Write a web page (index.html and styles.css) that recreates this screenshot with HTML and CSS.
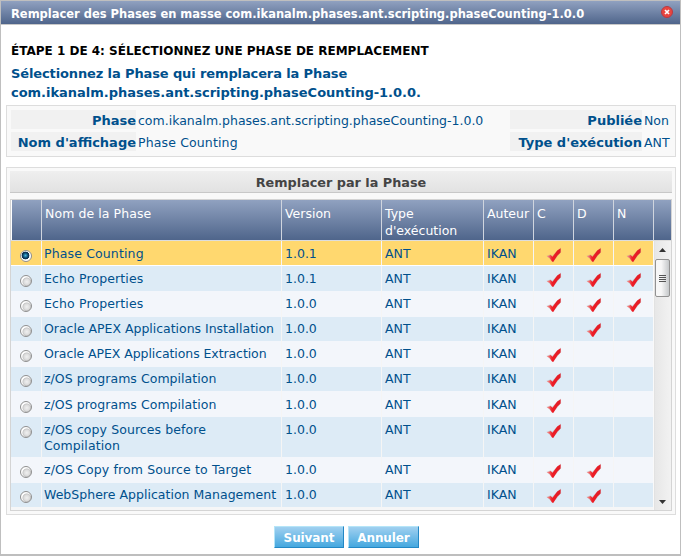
FILE: index.html
```html
<!DOCTYPE html>
<html lang="fr">
<head>
<meta charset="utf-8">
<title>Remplacer des Phases en masse</title>
<link rel="stylesheet" href="styles.css">
</head>
<body>
<svg class="defs" width="0" height="0">
  <defs>
    <linearGradient id="red" x1="0" x2="1"><stop offset="0" stop-color="#f5a9a4"/><stop offset=".4" stop-color="#ee1c25"/><stop offset="1" stop-color="#e21d27"/></linearGradient>
    <symbol id="tick" viewBox="0 0 16 16"><path d="M0.5 8.8 L4.6 7.2 L6.2 8.6 L14.6 .4 L15.2 5 L7 15 Z" fill="#999" opacity=".3"/><path d="M0.5 9.4 L4.6 8 L6.5 9.8 L11.2 3.4 L14.7 1.2 L14.6 5.4 L11.5 8.6 L7.2 15 L6 14.4 L3.4 10.8 Z" fill="url(#red)"/></symbol>
  </defs>
</svg>
<div class="dialog">
  <header class="titlebar">
    <span class="title">Remplacer des Phases en masse com.ikanalm.phases.ant.scripting.phaseCounting-1.0.0</span>
    <svg class="close" viewBox="0 0 12 12"><circle cx="6" cy="6" r="5.5" fill="#e8453f" stroke="#b63a45"/><path d="M4 4l4 4M8 4l-4 4" stroke="#fff" stroke-width="1.7"/></svg>
  </header>
  <h1 class="step">ÉTAPE 1 DE 4: SÉLECTIONNEZ UNE PHASE DE REMPLACEMENT</h1>
  <h2 class="lead"><span class="lead-a">Sélectionnez la Phase qui remplacera la Phase</span><br><span class="lead-b">com.ikanalm.phases.ant.scripting.phaseCounting-1.0.0.</span></h2>
  <section class="info">
    <b>Phase</b><span class="fqn">com.ikanalm.phases.ant.scripting.phaseCounting-1.0.0</span><b>Publiée</b><span>Non</span>
    <b>Nom d'affichage</b><span class="display-name">Phase Counting</span><b>Type d'exécution</b><span>ANT</span>
  </section>
  <section class="panel">
    <h3 class="caption">Remplacer par la Phase</h3>
    <div class="table">
      <div class="cols head"><div></div><div>Nom de la Phase</div><div>Version</div><div>Type<br>d'exécution</div><div>Auteur</div><div>C</div><div>D</div><div>N</div><div></div></div>
      <div class="scroller">
        <div class="rows" id="rows"></div>
        <div class="scrollbar">
          <svg class="arrow" viewBox="0 0 7 4"><path d="M3.5 0L7 4H0Z" fill="#333"/></svg>
          <div class="thumb"><i></i><i></i><i></i><i></i></div>
          <svg class="arrow down" viewBox="0 0 7 4"><path d="M0 0H7L3.5 4Z" fill="#333"/></svg>
        </div>
      </div>
    </div>
  </section>
  <footer class="actions"><button>Suivant</button><button>Annuler</button></footer>
</div>
<script src="rows.js"></script>
</body>
</html>
```
FILE: styles.css
```css
* { box-sizing: border-box; }
body { margin: 0; background: #fff; font: 12.5px/16px "DejaVu Sans", sans-serif; color: #00508c; }
.defs { position: absolute; }
.dialog { width: 681px; height: 556px; border: 1px solid #bfbfbf; border-bottom: 2px solid #bebebe; overflow: hidden; }
.titlebar { height: 24px; display: flex; justify-content: space-between; padding: 5px 7px 0 10px; background: linear-gradient(#90a1c0, #4f658b); border-bottom: 1px solid #c8c8c8; color: #fff; }
.title { font: bold 11.5px/17px "DejaVu Sans", sans-serif; letter-spacing: -.01px; white-space: nowrap; }
.close { width: 12px; height: 12px; }
h1, h2, h3 { margin: 0; white-space: nowrap; }
.step { margin: 17px 0 0 10px; font-size: 12px; line-height: 18px; color: #000; }
.lead { margin: 4px 0 0 10px; font-size: 13px; line-height: 19px; }
.lead-a { letter-spacing: -.12px; }
.lead-b { letter-spacing: -.02px; }
.info { margin: 3px 4px 0 5px; height: 52px; border: 1px solid #ddd; background: #f9f9f9; padding: 4px; display: grid; grid-template-columns: 125px 374px 132px 1fr; grid-template-rows: 19px 19px; row-gap: 3px; white-space: nowrap; }
.info b { background: #f1f1f1; text-align: right; font-size: 13px; line-height: 21px; }
.info span { padding-left: 2px; line-height: 21px; }
.display-name { letter-spacing: .14px; }
.panel { margin: 10px 4px 0 5px; height: 348px; border: 1px solid #ddd; background: #f9f9f9; padding: 3px; }
.caption { height: 22px; background: linear-gradient(#efefef, #e2e2e2); border-bottom: 1px solid #c8c8c8; color: #444; font-size: 12.8px; line-height: 23px; text-align: center; }
.table { margin-top: 6px; border: 1px solid #d4d4d4; height: 312px; overflow: hidden; }
.cols { display: grid; grid-template-columns: 30px 240px 100px 102px 50px 40px 40px 40px 1fr; }
.head { height: 41px; background: linear-gradient(#90a1c0, #4f658b); color: #fff; line-height: 17px; border-bottom: 1px solid #ddd; }
.head div { padding: 5px 0 0 3px; border-left: 1px solid #d0d5de; }
.head div:nth-child(2) { letter-spacing: .07px; }
.head div:first-child { border-left-color: #fff; }
.scroller { display: flex; height: 269px; }
.rows { width: 642px; display: grid; grid-template-rows: 25px 25px 26px 24px 26px 24px 26px 40px 26px 24px; background: #f5f6f7; }
.row { grid-template-columns: 30px 240px 100px 102px 50px 40px 40px 40px; background: #f3f6fb; height: 100%; }
.row div { padding: 5px 0 0 3px; border-left: 1px solid #f5f5f5; white-space: nowrap; }
.row div:nth-child(2) { padding-left: 2px; }
.row div:first-child { border-left: 0; padding: 9px 0 0 9px; }
.row.blue { background: #ddebf6; }
.row.up div { padding-top: 4px; }
.row.up div:first-child { padding-top: 8px; }
.row.low div { padding-top: 6px; }
.row.low div:first-child { padding-top: 10px; }
.row.selected { background: #ffd86f; border-bottom: 1px solid #fff; }
.row svg { display: block; width: 16px; height: 16px; margin: 1px 0 0 9px; }
.radio { display: block; width: 12px; height: 12px; border: 1px solid #8f8f8f; border-radius: 50%; background: radial-gradient(circle at 58% 58%, #f0f0f0 0, #dcdcdc 35%, #c6c6c6 48%, #fff 58%); }
.selected .radio { background: radial-gradient(circle at 45% 45%, #45b8e0 0, #073a61 36%, #0a304e 46%, #fff 54%); }
.scrollbar { width: 17px; flex: 1; margin-left: 1px; padding-right: 1px; border-left: 1px solid #e2e2e2; background: linear-gradient(90deg, #e7e7e7, #f2f2f2); display: flex; flex-direction: column; align-items: center; }
.arrow { width: 7px; height: 4px; margin-top: 7px; }
.arrow.down { margin: auto 0 6px; }
.thumb { width: 15px; height: 38px; margin-top: 7px; border: 1px solid #929292; border-radius: 2px; background: linear-gradient(90deg, #f7f7f7 40%, #c5c8ca); display: flex; flex-direction: column; align-items: center; justify-content: center; gap: 1px; }
.thumb i { width: 7px; height: 1px; background: #555; }
.actions { margin-top: 11px; padding-left: 273px; display: flex; gap: 4px; }
button { width: 70px; height: 22px; border: 1px solid; border-color: #b5e5f8 #2388c5 #2388c5 #b5e5f8; background: linear-gradient(#a0d0f0, #45a8df); font: bold 12px/18px "DejaVu Sans", sans-serif; letter-spacing: -.1px; color: #fff; padding: 1px 0 0; }
button + button { width: 71px; }
```
FILE: rows.js
```js
// name, version, marks shown in C/D/N, row classes, name tracking in px
const phases = [
  ["Phase Counting", "1.0.1", "CDN", "selected", 0.14],
  ["Echo Properties", "1.0.1", "CDN", "blue", 0.13],
  ["Echo Properties", "1.0.0", "CDN", "", 0.13],
  ["Oracle APEX Applications Installation", "1.0.0", "D", "blue up", -0.02],
  ["Oracle APEX Applications Extraction", "1.0.0", "C", "", -0.08],
  ["z/OS programs Compilation", "1.0.0", "C", "blue up", 0.04],
  ["z/OS programs Compilation", "1.0.0", "C", "low", 0.04],
  ["z/OS copy Sources before<br>Compilation", "1.0.0", "C", "blue", 0.08],
  ["z/OS Copy from Source to Target", "1.0.0", "CD", "", 0.13],
  ["WebSphere Application Management", "1.0.0", "CD", "blue up", 0.02]
];
const tick = '<svg><use href="#tick"/></svg>';
document.getElementById("rows").innerHTML = phases.map(([name, version, shown, cls, tracking]) => {
  const marks = ["C", "D", "N"].map(k => `<div>${shown.includes(k) ? tick : ""}</div>`).join("");
  return `<div class="cols row ${cls}"><div><span class="radio"></span></div><div style="letter-spacing:${tracking}px">${name}</div><div>${version}</div><div>ANT</div><div>IKAN</div>${marks}</div>`;
}).join("");
```
